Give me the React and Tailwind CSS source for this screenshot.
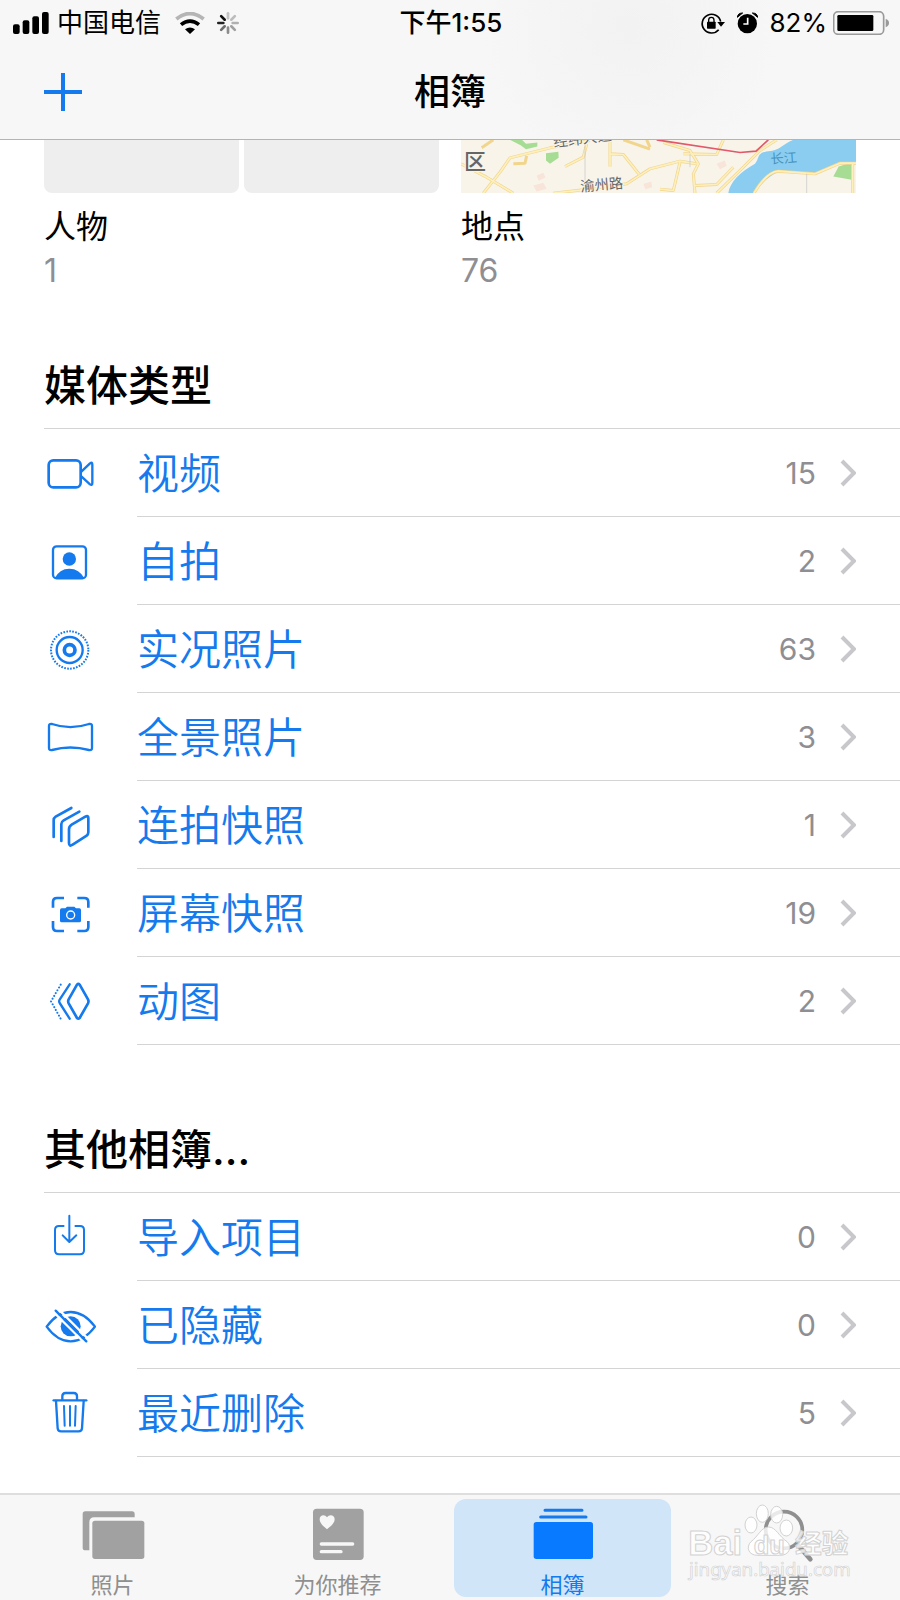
import React, { useState } from 'react';

// Status bar
const SignalIcon = () => (
  <svg width="36" height="22" viewBox="38 32 108 66" fill="#000" aria-hidden="true">
    <rect x="38" y="69" width="20" height="29" rx="6" />
    <rect x="67" y="57" width="20" height="41" rx="6" />
    <rect x="96" y="45" width="20" height="53" rx="6" />
    <rect x="125" y="32" width="20" height="66" rx="6" />
  </svg>
);

const WifiIcon = () => (
  <svg width="30" height="22" viewBox="523 32 90 66" fill="none" strokeWidth="11" aria-hidden="true">
    <path d="M527 53 Q568 20 609 53" stroke="#b5b5b5" />
    <path d="M541 70 Q568 49 595 70" stroke="#000" />
    <path d="M568 98 L553 84 Q568 73 583 84 Z" fill="#000" />
  </svg>
);

// clockwise from the top, the darkest spoke comes last
const spokes = ['#c4c4c4', '#bcbcbc', '#b0b0b0', '#a0a0a0', '#8c8c8c', '#6e6e6e', '#222222', '#111111'];

const Spinner = () => (
  <svg width="22" height="22" viewBox="0 0 66 66" aria-hidden="true">
    {spokes.map((color, i) => (
      <path
        key={i}
        d="M33 4 V19"
        stroke={color}
        strokeWidth="8"
        strokeLinecap="round"
        transform={`rotate(${i * 45} 33 33)`}
      />
    ))}
  </svg>
);

const RotationLockIcon = () => (
  <svg width="25" height="22" viewBox="746 32 75 66" fill="none" stroke="#000" strokeWidth="5" aria-hidden="true">
    <path d="M808 61 A28 28 0 1 0 802 85" />
    <path d="M798 62 H821 L809 76 Z" fill="#000" stroke="none" />
    <rect x="767" y="61" width="26" height="21" rx="2" fill="#000" stroke="none" />
    <path d="M772 62 V56 A8 8 0 0 1 788 56 V62" strokeWidth="4" />
  </svg>
);

const AlarmIcon = () => (
  <svg width="21" height="22" viewBox="864 33 63 66" aria-hidden="true">
    <circle cx="895" cy="68" r="29" fill="#000" />
    <path d="M865 49 Q866 36 881 36 Z M926 49 Q925 36 910 36 Z" fill="#000" stroke="#000" strokeWidth="3" />
    <path d="M896 50 V69 H883" fill="none" stroke="#fff" strokeWidth="5" />
  </svg>
);

const BatteryIcon = () => (
  <svg width="56" height="24" viewBox="1148 29 168 72" aria-hidden="true">
    <rect x="1150" y="31" width="150" height="68" rx="14" fill="none" stroke="#9a9a9a" strokeWidth="5" />
    <rect x="1161" y="41" width="108" height="48" rx="4" fill="#000" />
    <path d="M1306 53 Q1316 56 1316 65 Q1316 74 1306 78 Z" fill="#9a9a9a" />
  </svg>
);

// Row icons
const RowIcon = ({ viewBox, children }) => (
  <svg
    width="52"
    height="52"
    viewBox={viewBox}
    fill="none"
    stroke="currentColor"
    strokeWidth="8"
    strokeLinecap="round"
    strokeLinejoin="round"
    aria-hidden="true"
  >
    {children}
  </svg>
);

const VideoIcon = () => (
  <RowIcon viewBox="72 48 156 156">
    <rect x="86" y="88" width="96" height="81" rx="14" />
    <path d="M184 122 L210 97 Q217 92 217 101 V156 Q217 165 210 160 L184 136" strokeWidth="7" />
  </RowIcon>
);

const SelfieIcon = () => (
  <RowIcon viewBox="72 310 156 156">
    <rect x="99" y="344" width="99" height="96" rx="11" strokeWidth="7" />
    <circle cx="148" cy="382" r="20" fill="currentColor" stroke="none" />
    <path d="M104 440 Q118 411 148 411 Q178 411 193 440 Z" fill="currentColor" stroke="none" />
  </RowIcon>
);

const LiveIcon = () => (
  <RowIcon viewBox="72 576 156 156">
    <circle cx="149" cy="657" r="16" strokeWidth="11" />
    <circle cx="149" cy="657" r="39" strokeWidth="7" />
    <circle cx="149" cy="657" r="56" strokeWidth="6" strokeDasharray="5 4" strokeLinecap="butt" />
  </RowIcon>
);

const PanoramaIcon = () => (
  <RowIcon viewBox="72 842 156 156">
    <path
      d="M87 887 Q87 879 96 881 Q151 900 207 881 Q216 879 216 887 V953 Q216 961 207 959 Q151 944 96 959 Q87 961 87 953 Z"
      strokeWidth="7"
    />
  </RowIcon>
);

const BurstIcon = () => (
  <RowIcon viewBox="72 84 156 156">
    <path d="M154 111 L107 137 Q101 141 101 148 V198" />
    <path d="M178 122 L131 148 Q124 152 124 159 V210" />
    <path d="M155 161 L196 137 Q205 132 205 141 V184 Q205 190 200 194 L158 221 Q147 228 147 217 V175 Q147 166 155 161 Z" />
  </RowIcon>
);

const ScreenshotIcon = () => (
  <RowIcon viewBox="72 350 156 156">
    <path d="M99 412 V395 Q99 383 111 383 H132 M172 383 H193 Q205 383 205 395 V412 M205 452 V470 Q205 482 193 482 H172 M132 482 H111 Q99 482 99 470 V452" strokeLinecap="butt" />
    <path d="M125 414 H136 L141 409 H163 L168 414 H178 Q183 414 183 419 V451 Q183 456 178 456 H125 Q120 456 120 451 V419 Q120 414 125 414 Z" fill="currentColor" stroke="none" />
    <circle cx="152" cy="434" r="12" stroke="#fff" strokeWidth="4" />
  </RowIcon>
);

const AnimatedIcon = () => (
  <RowIcon viewBox="72 616 156 156">
    <path d="M171 645 Q175 641 179 645 L204 689 Q207 695 204 701 L179 745 Q175 749 171 745 L146 701 Q143 695 146 689 Z" />
    <path d="M149 644 L119 690 Q116 695 119 700 L149 747" strokeWidth="7" />
    <path d="M122 645 L93 695 L122 747" strokeWidth="6" strokeDasharray="0.1 9.6" />
  </RowIcon>
);

const ImportIcon = () => (
  <RowIcon viewBox="132 302 156 156">
    <path d="M193 347 H177 Q165 347 165 359 V420 Q165 432 177 432 H240 Q252 432 252 420 V359 Q252 347 240 347 H224" strokeWidth="6" strokeLinecap="butt" />
    <path d="M208 316 V393 M188 375 L208 395 L229 375" strokeWidth="6" />
  </RowIcon>
);

const HiddenIcon = () => (
  <RowIcon viewBox="132 566 156 156">
    <path d="M140 649 Q172 605 212 605 Q252 605 285 649 Q252 693 212 693 Q172 693 140 649 Z" strokeWidth="7" />
    <circle cx="212" cy="648" r="30" fill="currentColor" stroke="none" />
    <path d="M176 597 L268 689 M159 603 L251 695" stroke="#fff" strokeWidth="7" strokeLinecap="butt" />
    <path d="M167 601 L259 693" strokeWidth="7" />
  </RowIcon>
);

const TrashIcon = () => (
  <RowIcon viewBox="132 832 156 156">
    <path d="M161 872 H259" strokeWidth="7" />
    <path d="M187 870 V860 Q187 850 197 850 H221 Q231 850 231 860 V870" strokeWidth="7" />
    <path d="M168 874 L173 956 Q174 965 183 965 H236 Q245 965 246 956 L251 874" strokeWidth="7" />
    <path d="M192 889 L194 948 M210 889 V948 M227 889 L225 948" strokeWidth="6" />
  </RowIcon>
);

// Tab icons
const TabIcon = ({ viewBox, children }) => (
  <svg width="80" height="56" viewBox={viewBox} aria-hidden="true">
    {children}
  </svg>
);

const PhotosTabIcon = () => (
  <TabIcon viewBox="218 80 240 168">
    <path d="M255 93 H395 Q403 93 403 101 V111 H282 Q267 111 267 126 V210 H255 Q247 210 247 202 V101 Q247 93 255 93 Z" fill="#a1a1a1" />
    <rect x="276" y="121" width="156" height="115" rx="8" fill="#a1a1a1" />
  </TabIcon>
);

const ForYouTabIcon = () => (
  <TabIcon viewBox="892 80 240 168">
    <rect x="937" y="85" width="152" height="154" rx="11" fill="#a1a1a1" />
    <path d="M979 147 C970 139 957 130 957 117 C957 103 973 101 979 111 C985 101 1002 103 1002 117 C1002 130 988 139 979 147 Z" fill="#f7f7f7" />
    <path d="M962 191 H1056 M962 214 H1021" stroke="#f7f7f7" strokeWidth="10" strokeLinecap="round" />
  </TabIcon>
);

const AlbumsTabIcon = () => (
  <TabIcon viewBox="218 80 240 168">
    <path d="M284 90 H395 M271 110 H407" stroke="#1479ea" strokeWidth="9" strokeLinecap="round" />
    <rect x="250" y="125" width="178" height="111" rx="8" fill="#077aff" />
  </TabIcon>
);

const SearchTabIcon = () => (
  <TabIcon viewBox="892 80 240 168">
    <circle cx="1000" cy="149" r="55" fill="none" stroke="#8f8f8f" strokeWidth="11" />
    <path d="M1041 193 L1079 237" stroke="#8f8f8f" strokeWidth="14" strokeLinecap="round" />
  </TabIcon>
);

const Watermark = () => (
  <svg
    className="pointer-events-none absolute top-1 left-3"
    width="168"
    height="82"
    viewBox="712 64 504 246"
    fill="#fff"
    fillOpacity="0.8"
    stroke="#d2d2d2"
    strokeWidth="3"
    strokeLinejoin="round"
    fontFamily="'Noto Sans', 'Noto Sans CJK SC', sans-serif"
  >
    <ellipse cx="904" cy="130" rx="18" ry="24" />
    <ellipse cx="938" cy="96" rx="18" ry="26" />
    <ellipse cx="981" cy="99" rx="18" ry="25" />
    <ellipse cx="1010" cy="139" rx="19" ry="24" />
    <path d="M957 136 C978 136 988 164 1012 180 C1028 194 1020 222 990 221 H925 C896 222 888 196 904 180 C926 164 934 136 957 136 Z" />
    <text x="716" y="220" fontSize="104" fontWeight="700" fontFamily="'Liberation Sans', sans-serif">Bai</text>
    <text x="912" y="217" fontSize="76" fontWeight="700" fontFamily="'Liberation Sans', sans-serif">du</text>
    <text x="1036" y="213" fontSize="80" fontWeight="700" fontFamily="'Noto Sans CJK SC', sans-serif">经验</text>
    <text x="718" y="284" fontSize="56" strokeWidth="2">jingyan.baidu.com</text>
  </svg>
);

const PlacesMap = () => (
  <svg
    className="block h-[53px] w-full"
    viewBox="33 28 1185 160"
    preserveAspectRatio="xMidYMid slice"
    fontFamily="'Noto Sans CJK SC', sans-serif"
    role="img"
    aria-label="地点"
  >
    <rect x="33" y="28" width="1185" height="160" fill="#f8f4ea" />
    <path d="M180 28 H216 L228 40 L262 36 L262 48 L228 56 L212 44 Z M288 68 L325 64 L326 82 L300 100 L288 90 Z M1166 108 L1205 96 V148 L1150 138 Z" fill="#a6dc94" />
    <path d="M260 135 l20 -8 6 14 -20 10z M800 100 l24 -10 6 16 -20 10z M580 160 l24 -6 2 16 -20 6z M250 165 l30 -8 10 18 -30 8z" fill="#f8e4d8" />
    <path d="M1030 28 L1218 28 V98 L1170 98 L1100 128 L985 124 C950 140 930 165 912 188 H835 C840 155 870 125 915 100 C930 80 920 66 955 62 C990 60 1000 40 1030 28 Z" fill="#8bcdf0" />
    <g fill="none" stroke="#f2d58c" strokeWidth="9" strokeLinejoin="round">
      <path d="M100 188 L150 125 L180 82 L300 52 L420 30 M33 100 L110 140 L190 188 M95 52 L130 28 M190 100 L225 98 L230 76" />
      <path d="M345 108 L400 80 L410 40 M480 28 V108 M480 70 L520 72 L568 132 M310 188 L400 178 L530 160 L600 115 L690 92 L740 100" />
      <path d="M520 28 L600 56 M590 28 L600 50 M640 36 L720 60 L745 100 L730 130 L735 188 M700 70 L800 72 L820 28 M690 95 L670 180 L630 176" />
      <path d="M735 165 L800 162 L850 110 M800 188 L870 120 L930 60 L980 28 M912 188 Q950 124 985 122 L1095 130 L1170 98 H1218 M1208 98 V188" />
    </g>
    <g fill="none" stroke="#fdf0bd" strokeWidth="5" strokeLinejoin="round">
      <path d="M100 188 L150 125 L180 82 L300 52 L420 30 M33 100 L110 140 L190 188 M480 28 V108 M480 70 L520 72 L568 132" />
      <path d="M345 108 L400 80 L410 40 M310 188 L400 178 L530 160 L600 115 L690 92 L740 100 M640 36 L720 60 L745 100 L730 130 L735 188" />
      <path d="M700 70 L800 72 L820 28 M690 95 L670 180 L630 176 M735 165 L800 162 L850 110 M800 188 L870 120 L930 60 L980 28" />
      <path d="M912 188 Q950 124 985 122 L1095 130 L1170 98 H1218 M1208 98 V188" />
    </g>
    <path d="M405 40 V160 M720 70 V110 M1070 130 V188" stroke="#c4c4c4" strokeWidth="2" />
    <path d="M620 28 L870 66 L918 62 L955 28" fill="none" stroke="#e2586a" strokeWidth="5" />
    <g stroke="#f8f4ea" strokeWidth="6" paintOrder="stroke">
      <text x="42" y="116" fontSize="66" fontWeight="500" fill="#666">区</text>
      <text x="312" y="50" fontSize="44" fill="#666" transform="rotate(-7 312 50)">经纬大道</text>
      <text x="392" y="184" fontSize="43" fill="#666" transform="rotate(-5 392 184)">渝州路</text>
    </g>
    <text x="962" y="100" fontSize="40" fill="#4693bb" transform="rotate(-4 962 100)">长江</text>
  </svg>
);

const mediaTypes = [
  { name: '视频', count: 15, Icon: VideoIcon },
  { name: '自拍', count: 2, Icon: SelfieIcon },
  { name: '实况照片', count: 63, Icon: LiveIcon },
  { name: '全景照片', count: 3, Icon: PanoramaIcon },
  { name: '连拍快照', count: 1, Icon: BurstIcon },
  { name: '屏幕快照', count: 19, Icon: ScreenshotIcon },
  { name: '动图', count: 2, Icon: AnimatedIcon },
];

const otherAlbums = [
  { name: '导入项目', count: 0, Icon: ImportIcon },
  { name: '已隐藏', count: 0, Icon: HiddenIcon },
  { name: '最近删除', count: 5, Icon: TrashIcon },
];

const tabs = [
  { name: '照片', Icon: PhotosTabIcon },
  { name: '为你推荐', Icon: ForYouTabIcon },
  { name: '相簿', Icon: AlbumsTabIcon },
  { name: '搜索', Icon: SearchTabIcon, watermark: true },
];

const AlbumSection = ({ title, items, className }) => (
  <section className={className}>
    <h2 className="ml-11 h-[88px] border-b border-[#d4d4d6] text-[42px] leading-[90px] font-medium text-black">
      {title}
    </h2>
    <ul>
      {items.map(({ name, count, Icon }) => (
        <li key={name}>
          <a href="#" className="flex h-[88px] pl-11 text-[#147aed]">
            <span className="flex w-[93px] shrink-0 items-center">
              <Icon />
            </span>
            <span className="flex flex-1 items-center border-b border-[#d4d4d6] pr-11">
              <span className="flex-1 pt-0.5 text-[42px] leading-none font-[350]">{name}</span>
              <span className="text-[30px] leading-none text-[#8e8e93]">{count}</span>
              <svg className="ml-6" width="16" height="28" viewBox="0 0 16 28" fill="none" stroke="#c7c7cc" strokeWidth="4" aria-hidden="true">
                <path d="M2 2 L14 14 L2 26" />
              </svg>
            </span>
          </a>
        </li>
      ))}
    </ul>
  </section>
);

export default function App() {
  const [activeTab, setActiveTab] = useState('相簿');

  return (
    <div className="flex min-h-screen flex-col bg-white font-['Inter','Noto_Sans_CJK_SC',sans-serif] text-black">
      <header className="sticky top-0 z-10 border-b border-[#b4b4b6] bg-[#f7f7f7] bg-[radial-gradient(circle_at_70%_20%,#f2f2f2,#f7f7f7_24%)]">
        <div className="grid h-11 grid-cols-[1fr_auto_1fr] items-center pt-0.5 pr-[11px] pl-[13px] text-[26px] leading-none">
          <div className="flex items-center">
            <SignalIcon />
            <span className="mr-3.5 ml-2">中国电信</span>
            <WifiIcon />
            <span className="ml-3">
              <Spinner />
            </span>
          </div>
          <span className="font-medium">下午1:55</span>
          <div className="flex items-center justify-end gap-3">
            <RotationLockIcon />
            <AlarmIcon />
            <span className="flex items-center gap-1.5">
              82%
              <BatteryIcon />
            </span>
          </div>
        </div>
        <div className="grid h-[95px] grid-cols-[1fr_auto_1fr] items-center px-11">
          <button type="button" aria-label="新建相簿" className="w-[38px] text-[#147aed]">
            <svg width="38" height="38" viewBox="0 0 38 38" stroke="currentColor" strokeWidth="4">
              <path d="M19 0 V38 M0 19 H38" />
            </svg>
          </button>
          <h1 className="text-4xl leading-none font-medium">相簿</h1>
        </div>
      </header>

      <main className="flex-1">
        <div className="grid grid-cols-2 gap-[22px] px-11">
          <a href="#">
            <div className="grid grid-cols-2 gap-[5px]">
              <div className="h-[53px] rounded-b-lg bg-[#eeeeee]" />
              <div className="h-[53px] rounded-b-lg bg-[#eeeeee]" />
            </div>
            <p className="mt-3 text-[32px] leading-11">人物</p>
            <p className="text-[32px] leading-11 text-[#8e8e93]">1</p>
          </a>
          <a href="#">
            <PlacesMap />
            <p className="mt-3 text-[32px] leading-11">地点</p>
            <p className="text-[32px] leading-11 text-[#8e8e93]">76</p>
          </a>
        </div>

        <AlbumSection title="媒体类型" items={mediaTypes} className="mt-12" />
        <AlbumSection title="其他相簿..." items={otherAlbums} className="mt-15 pb-9" />
      </main>

      <nav className="sticky bottom-0 border-t-2 border-[#dedede] bg-[#f7f7f7] py-1">
        <ul className="grid grid-cols-4">
          {tabs.map(({ name, Icon, watermark }) => {
            const active = name === activeTab;
            return (
              <li key={name} className="relative px-1">
                <button
                  type="button"
                  onClick={() => setActiveTab(name)}
                  className={`flex h-[98px] w-full flex-col items-center rounded-xl pt-2 ${
                    active ? 'bg-[#d0e5f8] text-[#147aed]' : 'text-[#8f8f8f]'
                  }`}
                >
                  <Icon />
                  <span className="mt-2.5 text-[22px] leading-6">{name}</span>
                </button>
                {watermark && <Watermark />}
              </li>
            );
          })}
        </ul>
      </nav>
    </div>
  );
}
